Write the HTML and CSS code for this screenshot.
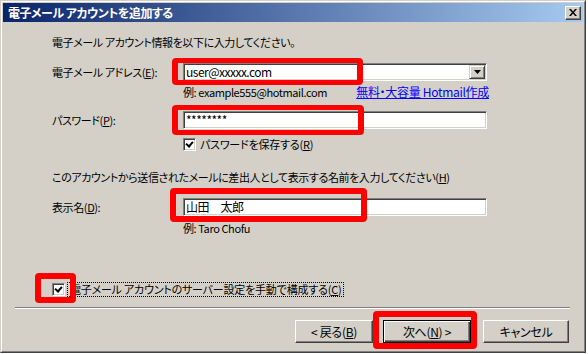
FILE: index.html
```html
<!DOCTYPE html>
<html lang="ja">
<head>
    <meta charset="UTF-8">
    <title>電子メール アカウントを追加する</title>
    <link rel="stylesheet" href="styles.css">
</head>
<body>
    <div class="page">
        <div class="window">
            <div class="window-inner">
                <div class="titlebar">
                    <span class="title">電子メール アカウントを追加する</span>
                    <span class="close-btn">
                        <svg width="8" height="7" viewBox="0 0 8 7"><path d="M0 0h2l2 2.5L6 0h2L5 3.5 8 7H6L4 4.5 2 7H0l3-3.5z" fill="#000"/></svg>
                    </span>
                </div>

                <div class="content">
                    <p class="intro">電子メール アカウント情報を以下に入力してください。</p>

                    <div class="row row-email">
                        <label class="label">電子メール アドレス(<u>E</u>):</label>
                        <div class="field combo">
                            <span class="value">user@xxxxx.com</span>
                            <span class="drop-btn">
                                <svg width="7" height="4" viewBox="0 0 7 4"><path d="M0 0h7L3.5 4z" fill="#000"/></svg>
                            </span>
                        </div>
                    </div>
                    <div class="hint hint-link">
                        <span>例: example555@hotmail.com</span>
                        <a class="link">無料・大容量 Hotmail作成</a>
                    </div>

                    <div class="row row-password">
                        <label class="label">パスワード(<u>P</u>):</label>
                        <div class="field"><span class="value">********</span></div>
                    </div>
                    <div class="check-row check-save">
                        <span class="checkbox checked"></span>
                        <span class="check-text">パスワードを保存する(<u>R</u>)</span>
                    </div>

                    <p class="note">このアカウントから送信されたメールに差出人として表示する名前を入力してください(<u>H</u>)</p>

                    <div class="row row-name">
                        <label class="label">表示名(<u>D</u>):</label>
                        <div class="field"><span class="value">山田　太郎</span></div>
                    </div>
                    <div class="hint">例: Taro Chofu</div>

                    <div class="check-row check-manual">
                        <span class="checkbox checked"></span>
                        <span class="check-text focus">電子メール アカウントのサーバー設定を手動で構成する(<u>C</u>)</span>
                    </div>
                </div>

                <div class="separator"></div>

                <div class="buttons">
                    <span class="btn btn-back">&lt; 戻る(<u>B</u>)</span>
                    <span class="btn btn-next default">次へ(<u>N</u>) &gt;</span>
                    <span class="btn btn-cancel">キャンセル</span>
                </div>
            </div>
        </div>

        <div class="mark mark-email"></div>
        <div class="mark mark-password"></div>
        <div class="mark mark-name"></div>
        <div class="mark mark-check"></div>
        <div class="mark mark-next"></div>
    </div>
</body>
</html>
```

FILE: styles.css
```css
* {
    margin: 0;
    padding: 0;
    box-sizing: border-box;
}

body {
    background: #ffffff;
    font-family: "Noto Sans CJK JP", sans-serif;
    font-size: 11px;
    letter-spacing: -0.4px;
    line-height: 16px;
    color: #000000;
    font-feature-settings: "palt";
}

.page {
    position: relative;
    width: 588px;
    height: 354px;
}

/* Window frame (classic raised border) */
.window {
    width: 586px;
    height: 353px;
    background: #d4d0c8;
    border: 1px solid;
    border-color: #d4d0c8 #404040 #404040 #d4d0c8;
}

.window-inner {
    height: 100%;
    border: 1px solid;
    border-color: #ffffff #808080 #808080 #ffffff;
    padding: 1px;
    display: flex;
    flex-direction: column;
}

.titlebar {
    height: 19px;
    display: flex;
    align-items: center;
    justify-content: space-between;
    padding: 0 2px 0 5px;
    background: linear-gradient(to right, #0a246a, #a6caf0);
}

.title {
    color: #ffffff;
    font-weight: bold;
    font-size: 12px;
    letter-spacing: -0.5px;
}

.close-btn {
    width: 16px;
    height: 14px;
    display: flex;
    align-items: center;
    justify-content: center;
    background: #d4d0c8;
    border: 1px solid;
    border-color: #ffffff #404040 #404040 #ffffff;
    box-shadow: inset -1px -1px 0 #808080;
}

/* Form area */
.content {
    padding-left: 49px;
    display: flex;
    flex-direction: column;
}

.intro {
    margin-top: 12px;
}

.row {
    display: flex;
    align-items: center;
    height: 18px;
}

.row-email {
    margin-top: 13px;
}

.row-password {
    margin-top: 11px;
}

.row-name {
    margin-top: 13px;
}

.label {
    width: 131px;
}

u {
    text-decoration: underline;
    text-underline-offset: 1px;
}

.field {
    width: 304px;
    height: 18px;
    background: #ffffff;
    border: 1px solid;
    border-color: #808080 #ffffff #ffffff #808080;
    box-shadow: inset 1px 1px 0 #404040, inset -1px -1px 0 #d4d0c8;
    display: flex;
    align-items: center;
    padding-left: 2px;
    font-size: 12px;
    letter-spacing: -0.5px;
}

.combo {
    justify-content: space-between;
    padding-right: 1px;
}

.drop-btn {
    width: 16px;
    height: 14px;
    display: flex;
    align-items: center;
    justify-content: center;
    background: #d4d0c8;
    border: 1px solid;
    border-color: #d4d0c8 #404040 #404040 #d4d0c8;
    box-shadow: inset 1px 1px 0 #ffffff, inset -1px -1px 0 #808080;
}

.hint {
    margin-left: 131px;
    width: 306px;
}

.hint-link {
    margin-top: 3px;
    display: flex;
    justify-content: space-between;
}

.row-name + .hint {
    margin-top: 4px;
}

.link {
    color: #0000ff;
    text-decoration: underline;
    font-size: 12px;
    letter-spacing: -0.3px;
}

.note {
    margin-top: 17px;
}

/* Checkboxes */
.check-row {
    display: flex;
    align-items: center;
    height: 16px;
}

.check-save {
    margin-top: 7px;
    margin-left: 131px;
    gap: 4px;
}

.check-manual {
    margin-top: 45px;
    gap: 3px;
}

.check-text {
    letter-spacing: -0.2px;
}

.checkbox {
    width: 13px;
    height: 13px;
    background: #ffffff;
    border: 1px solid;
    border-color: #808080 #ffffff #ffffff #808080;
    box-shadow: inset 1px 1px 0 #404040, inset -1px -1px 0 #d4d0c8;
    position: relative;
}

.checkbox.checked::after {
    content: "";
    position: absolute;
    left: 2px;
    top: 1px;
    width: 3px;
    height: 5px;
    border: solid #000000;
    border-width: 0 2px 2px 0;
    transform: translate(1px, 0) rotate(40deg);
}

.focus {
    outline: 1px dotted #000000;
    padding: 0 1px 0 2px;
    line-height: 13px;
}

/* Bottom */
.separator {
    margin: 10px 13px 0 12px;
    height: 2px;
    border-top: 1px solid #808080;
    border-bottom: 1px solid #ffffff;
}

.buttons {
    margin-top: 11px;
    padding-right: 14px;
    display: flex;
    justify-content: flex-end;
}

.btn {
    height: 23px;
    display: flex;
    align-items: center;
    justify-content: center;
    background: #d4d0c8;
    border: 1px solid;
    border-color: #ffffff #404040 #404040 #ffffff;
    box-shadow: inset -1px -1px 0 #808080;
    font-size: 12px;
    letter-spacing: -0.3px;
}

.btn-back {
    width: 78px;
}

.btn-next {
    width: 88px;
    margin-left: 10px;
}

.btn-cancel {
    width: 86px;
    margin-left: 12px;
}

.btn.default {
    border: 1px solid #000000;
    box-shadow: inset 1px 1px 0 #ffffff, inset -1px -1px 0 #404040, inset -2px -2px 0 #808080;
}

/* Red annotation frames */
.mark {
    position: absolute;
    border: 6px solid #ff0000;
    border-radius: 4px;
}

.mark-email {
    left: 172px;
    top: 58px;
    width: 191px;
    height: 27px;
    border-width: 5px 6px;
}

.mark-password {
    left: 172px;
    top: 105px;
    width: 192px;
    height: 30px;
    border-width: 5px 6px;
}

.mark-name {
    left: 170px;
    top: 188px;
    width: 197px;
    height: 34px;
}

.mark-check {
    left: 35px;
    top: 273px;
    width: 41px;
    height: 30px;
}

.mark-next {
    left: 373px;
    top: 311px;
    width: 104px;
    height: 38px;
}
```
